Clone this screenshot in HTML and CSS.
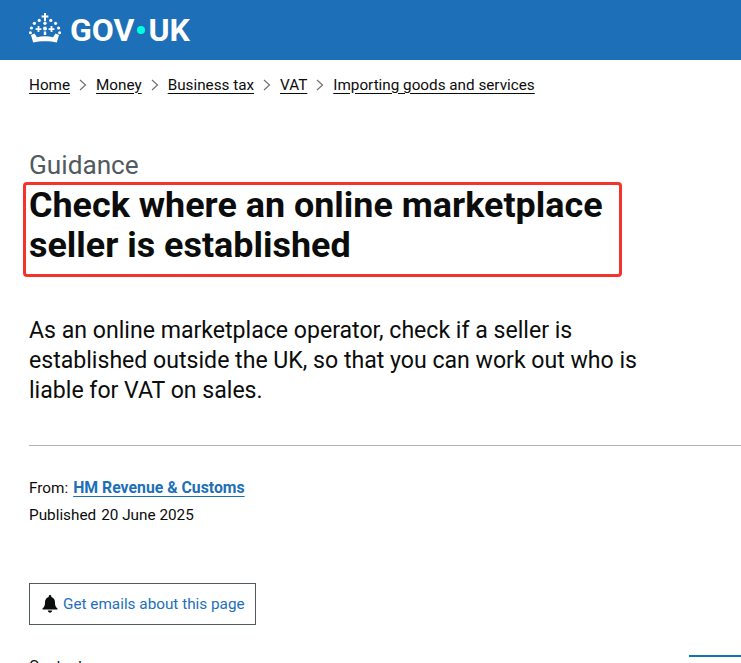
FILE: index.html
```html
<!DOCTYPE html>
<html lang="en">
<head>
<meta charset="utf-8">
<title>Check where an online marketplace seller is established</title>
<link rel="stylesheet" href="styles.css">
</head>
<body>
<header class="masthead">
  <a class="logo" href="#">
    <svg class="crown" viewBox="0 0 32 30" width="32" height="30" aria-hidden="true">
      <g fill="#fff">
        <path d="M15 0h2v2.600h2.400v1.900H17V8h-2V4.500h-2.400V2.600H15z"/>
        <circle cx="16" cy="10.200" r="1.700"/>
        <circle cx="10.200" cy="7.400" r="1.600"/><circle cx="21.800" cy="7.400" r="1.600"/>
        <circle cx="5.400" cy="10.300" r="1.600"/><circle cx="26.600" cy="10.300" r="1.600"/>
        <circle cx="2.400" cy="15" r="1.600"/><circle cx="29.600" cy="15" r="1.600"/>
        <circle cx="1.400" cy="19.800" r="1.500"/><circle cx="30.600" cy="19.800" r="1.500"/>
        <circle cx="16" cy="15.500" r="2"/>
        <path d="M8.600 13h1.800v2.200h2v1.700h-2v2h-1.800v-2h-2v-1.700h2zM21.600 13h1.800v2.200h2v1.700h-2v2h-1.800v-2h-2v-1.700h2z"/>
        <path d="M14.800 18.500h2.400v3.500h-2.400zM2 22l3.400-1.600c1.200 1.300 1.900 2.500 2.500 3.800 2.500-.6 5.200-.9 8.100-.9s5.600.3 8.100.9c.6-1.300 1.300-2.500 2.500-3.800L30 22l-2.200 7.600c-3.400-.9-7.500-1.400-11.800-1.400s-8.400.5-11.800 1.400z"/>
      </g>
    </svg>
    <span class="wordmark">GOV<span class="dot"></span>UK</span>
  </a>
</header>

<nav class="crumbs">
  <a href="#">Home</a><svg class="chev" viewBox="0 0 8 12" width="8" height="12"><path d="M1 1l5.500 5L1 11" fill="none" stroke="#6f7477" stroke-width="1.200"/></svg>
  <a href="#">Money</a><svg class="chev" viewBox="0 0 8 12" width="8" height="12"><path d="M1 1l5.500 5L1 11" fill="none" stroke="#6f7477" stroke-width="1.200"/></svg>
  <a href="#">Business tax</a><svg class="chev" viewBox="0 0 8 12" width="8" height="12"><path d="M1 1l5.500 5L1 11" fill="none" stroke="#6f7477" stroke-width="1.200"/></svg>
  <a href="#">VAT</a><svg class="chev" viewBox="0 0 8 12" width="8" height="12"><path d="M1 1l5.500 5L1 11" fill="none" stroke="#6f7477" stroke-width="1.200"/></svg>
  <a href="#">Importing goods and services</a>
</nav>

<main class="page">
  <div class="title-block">
    <span class="caption">Guidance</span>
    <h1 class="title">Check where an online marketplace seller is established<span class="highlight"></span></h1>
  </div>
  <p class="lead">As an online marketplace operator, check if a seller is established outside the UK, so that you can work out who is liable for VAT on sales.</p>
</main>
<hr class="rule">
<section class="page meta">
  <p class="meta-line"><span class="label">From:</span><a class="org" href="#">HM Revenue &amp; Customs</a></p>
  <p class="meta-line"><span class="label">Published</span>20 June 2025</p>
  <a class="signup" href="#">
    <svg class="bell" viewBox="0 0 16 18" width="16" height="18" aria-hidden="true"><path fill="#0b0c0c" d="M8 0c.8 0 1.300.6 1.300 1.400v.5C11.800 2.500 13 4.600 13 7.200c0 3.800 1 4.800 2.500 6.300v1H.5v-1C2 12 3 11 3 7.200 3 4.600 4.200 2.500 6.700 1.900v-.5C6.700.6 7.200 0 8 0zM5.800 15.500h4.400C10 16.900 9.100 17.700 8 17.700s-2-.8-2.200-2.200z"/></svg>
    <span>Get emails about this page</span>
  </a>
  <div class="lower">
    <span class="contents">Contents</span>
    <span class="side-line"></span>
  </div>
</section>
</body>
</html>
```
FILE: styles.css
```css
html, body { margin: 0; padding: 0; height: 663px; overflow: hidden; background: #fff; }
body { font-family: Roboto, "Noto Sans", sans-serif; color: #0b0c0c; }
a { color: inherit; }

.masthead { background: #1d70b8; height: 60px; display: flex; align-items: center; padding-left: 29px; }
.logo { display: flex; align-items: center; gap: 9px; color: #fff; text-decoration: none; }
.crown { display: block; margin-bottom: 5px; }
.wordmark { display: flex; align-items: center; font-size: 32px; font-weight: 700; line-height: 30px; }
.dot { width: 8px; height: 8px; margin: 0 3px; border-radius: 50%; background: #00ffe0; }

.crumbs { display: flex; align-items: center; height: 49px; padding-left: 29px; font-size: 15.250px; }
.crumbs a { text-underline-offset: 3px; }
.chev { margin: 0 9px; }

.page { padding: 0 29px; }
.title-block { padding-top: 39px; }
.caption { display: block; font-size: 26.200px; line-height: 35px; color: #505a5f; }
.title { position: relative; margin: 0; padding-top: 2px; width: 600px; font-size: 35.900px; line-height: 40px; font-weight: 700; }
.highlight { position: absolute; left: -6px; top: -1px; width: 599px; height: 95px; box-sizing: border-box; border: 3px solid #f4332d; border-radius: 4px; }
.lead { margin: 51px 0 0; width: 625px; font-size: 23.100px; line-height: 30px; }

.rule { margin: 39px 0 0 29px; border: 0; border-top: 1px solid #b1b4b6; }

.meta { padding-top: 28px; font-size: 15.300px; }
.meta-line { margin: 0; line-height: 27px; }
.label { margin-right: 5px; }
.org { color: #1d70b8; font-size: 15.800px; font-weight: 700; text-underline-offset: 3px; }

.signup { display: inline-flex; align-items: center; gap: 5px; margin-top: 54px; height: 42px; padding: 0 10px 0 12px; box-sizing: border-box; border: 1px solid #505a5f; color: #1d70b8; text-decoration: none; }
.bell { display: block; }

.lower { display: flex; justify-content: space-between; align-items: flex-start; margin-right: -29px; margin-top: 29px; }
.contents { padding-top: 2px; font-size: 15.300px; line-height: 20px; }
.side-line { width: 52px; height: 2px; margin-top: 1px; background: #1d70b8; }
```
